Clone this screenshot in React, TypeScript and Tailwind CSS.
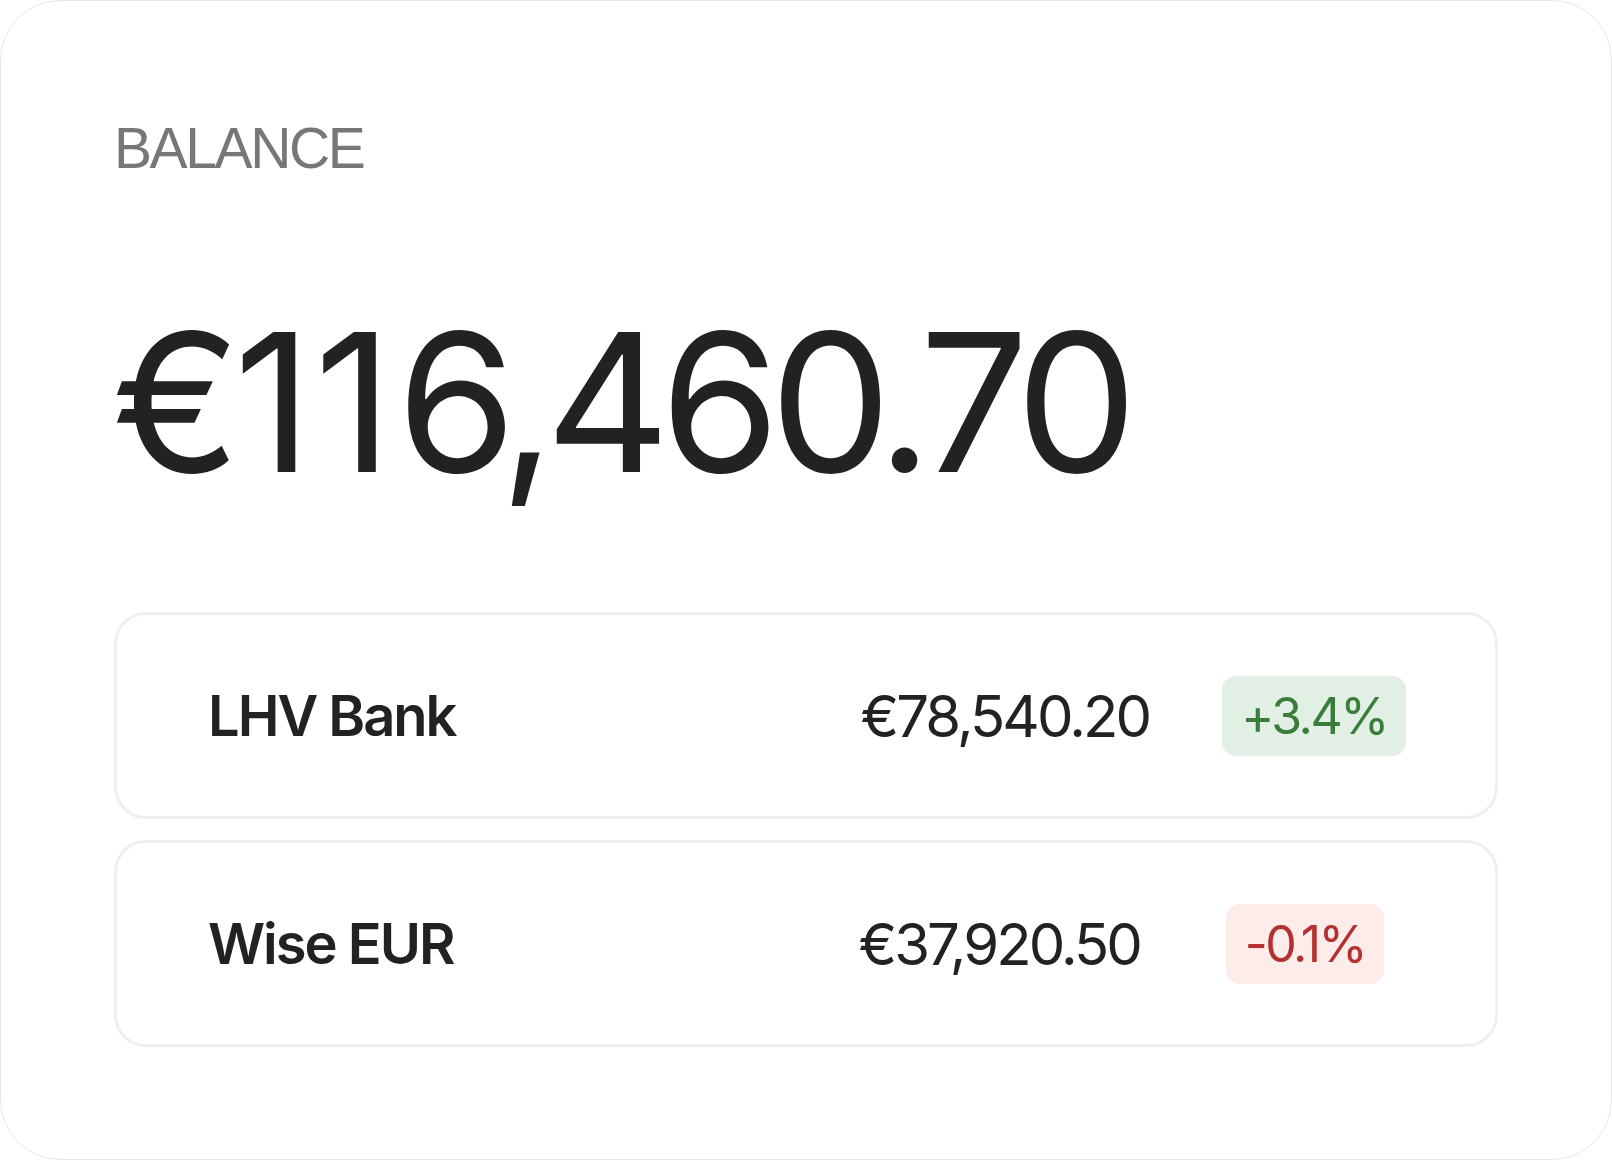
import React from "react";

type Account = {
  name: string;
  amount: string;
  change: string;
  up: boolean;
};

const accounts: Account[] = [
  { name: "LHV Bank", amount: "€78,540.20", change: "+3.4%", up: true },
  { name: "Wise EUR", amount: "€37,920.50", change: "-0.1%", up: false },
];

function AccountRow({ account }: { account: Account }) {
  return (
    <div className="flex h-[207px] items-center whitespace-nowrap rounded-[32px] border-[3px] border-[#efefef] pl-[91px]">
      <span className="shrink-0 text-[56px] font-semibold leading-none tracking-[-2px] text-[#222222]">
        {account.name}
      </span>
      <span className="ml-[405px] shrink-0 text-[58px] leading-none tracking-[-2.9px] text-[#222222]">
        {account.amount}
      </span>
      <div className="flex w-[330px] shrink-0 justify-center">
        <span
          className={
            account.up
              ? "flex h-[80px] items-center rounded-[14px] bg-[#e2efe4] px-[19px] text-[50px] leading-none tracking-[-2.5px] text-[#3a7d3b]"
              : "flex h-[80px] items-center rounded-[14px] bg-[#fdecea] px-[19px] text-[50px] leading-none tracking-[-2.5px] text-[#b3312f]"
          }
        >
          {account.change}
        </span>
      </div>
    </div>
  );
}

export default function App() {
  return (
    <div className="flex h-screen w-full flex-col rounded-[60px] border border-[#e6e6e6] bg-white px-[113px] pt-[119px] font-['Inter',sans-serif]">
      <div className="font-['Liberation_Sans',Arial,sans-serif] text-[57px] leading-none tracking-[-2.4px] text-[#777777]">
        BALANCE
      </div>
      <div className="ml-[-2px] mt-[129px] whitespace-nowrap text-[193px] leading-none tracking-[-10px] text-[#222222]">
        €<span className="ml-[3px] mr-[12px]">1</span>
        <span className="mr-[14px]">1</span>6,460.70
      </div>
      <div className="mt-[113px] flex flex-col gap-[21px]">
        {accounts.map((a) => (
          <AccountRow key={a.name} account={a} />
        ))}
      </div>
    </div>
  );
}
